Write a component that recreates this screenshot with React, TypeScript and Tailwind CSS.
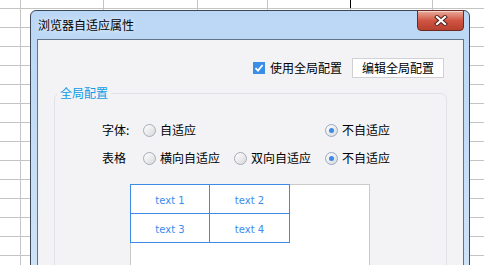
const COLS = [
  "w-[21px]",
  "w-[83px]",
  "w-[94px]",
  "w-[70px]",
  "w-[83px]",
  "w-[82px]",
];
const ROWS = 15;

function Sheet() {
  return (
    <div className="flex flex-col">
      {Array.from({ length: ROWS }).map((_, r) => (
        <div
          key={r}
          className={`flex shrink-0 border-b border-[#c4c4c4] ${r === 0 ? "h-[9px]" : "h-[19px]"}`}
        >
          {COLS.map((w, c) => (
            <div
              key={c}
              className={`${w} shrink-0 border-r ${r === 0 && c === 4 ? "border-black" : "border-[#c4c4c4]"}`}
            />
          ))}
          <div className="flex-1" />
        </div>
      ))}
    </div>
  );
}

function Radio({ checked, label }: { checked?: boolean; label: string }) {
  return (
    <label className="flex items-center gap-[4px]">
      <span
        className={`flex h-[13px] w-[13px] shrink-0 items-center justify-center rounded-full border bg-gradient-to-br from-white to-[#d9d9dc] ${checked ? "border-[#98a8c0]" : "border-[#a6acb6]"}`}
      >
        {checked && <span className="h-[5px] w-[5px] rounded-full bg-[#3a8ae6]" />}
      </span>
      <span>{label}</span>
    </label>
  );
}

function CloseButton() {
  return (
    <button className="-mt-px flex h-[21px] w-[47px] items-center justify-center rounded-b-[4px] border border-[#6e2a20] bg-gradient-to-b from-[#e9ab9c] via-[#d05542] to-[#b8402e] shadow-[inset_0_1px_0_rgba(255,255,255,0.5)]">
      <svg width="14" height="11" viewBox="0 0 14 11">
        <path d="M3 2 L11 9 M11 2 L3 9" stroke="#4a1e18" strokeWidth="4" strokeLinecap="square" />
        <path d="M3 2 L11 9 M11 2 L3 9" stroke="#ffffff" strokeWidth="2.2" strokeLinecap="square" />
      </svg>
    </button>
  );
}

function PreviewTable() {
  const cells = ["text 1", "text 2", "text 3", "text 4"];
  return (
    <div className="-ml-px -mt-px grid w-[160px] grid-cols-[79px_80px] border-l border-t border-[#3d8ae8]">
      {cells.map((t) => (
        <div
          key={t}
          className="flex h-[29px] items-center justify-center border-b border-r border-[#3d8ae8] pt-[3px] font-['DejaVu_Sans',sans-serif] text-[10px] text-[#3b8cee]"
        >
          {t}
        </div>
      ))}
    </div>
  );
}

export default function App() {
  return (
    <main className="relative h-[265px] w-[484px] overflow-hidden bg-white font-['Noto_Sans_CJK_SC','Noto_Sans',sans-serif] text-[12px] leading-[14px] text-black">
      <Sheet />

      <div className="absolute left-[30px] top-[10px] flex h-[270px] w-[440px] flex-col rounded-t-[6px] border border-[#3b4858] bg-gradient-to-b from-[#bad7f5] to-[#cfe3f8] pl-[6px] pr-[5px]">
        <div className="flex h-[28px] shrink-0 items-start justify-between">
          <span className="ml-px mt-[7px] text-black [text-shadow:0_0_6px_#fff]">浏览器自适应属性</span>
          <CloseButton />
        </div>

        <div className="flex flex-1 flex-col border border-[#62748a] bg-[#f3f3f6]">
          <div className="flex items-center justify-end pr-[19px] pt-[18px]">
            <span className="flex h-[12px] w-[12px] items-center justify-center bg-[#3a8ee8]">
              <svg width="10" height="10" viewBox="0 0 10 10">
                <path d="M1.5 5.2 L4 7.6 L8.6 2" fill="none" stroke="#fff" strokeWidth="1.8" />
              </svg>
            </span>
            <span className="ml-[5px]">使用全局配置</span>
            <button className="ml-[10px] h-[20px] border border-[#d2d2d6] bg-white px-[9px] leading-[18px]">
              编辑全局配置
            </button>
          </div>

          <fieldset className="mx-[16px] mt-[8px] flex-1 rounded-[6px] border border-[#e1e1e6] p-0">
            <legend className="ml-[2px] px-[3px] leading-[14px] text-[#119be6]">全局配置</legend>

            <div className="flex flex-col gap-[8px] pl-[47px] pt-[20px]">
              <div className="grid h-[20px] grid-cols-[41px_91px_91px_1fr] items-center">
                <span>字体:</span>
                <Radio label="自适应" />
                <span />
                <Radio checked label="不自适应" />
              </div>
              <div className="grid h-[20px] grid-cols-[41px_91px_91px_1fr] items-center">
                <span>表格</span>
                <Radio label="横向自适应" />
                <Radio label="双向自适应" />
                <Radio checked label="不自适应" />
              </div>
            </div>

            <div className="ml-[75px] mt-[16px] h-[120px] w-[240px] border border-[#cacaca] bg-white">
              <PreviewTable />
            </div>
          </fieldset>
        </div>
      </div>
    </main>
  );
}
